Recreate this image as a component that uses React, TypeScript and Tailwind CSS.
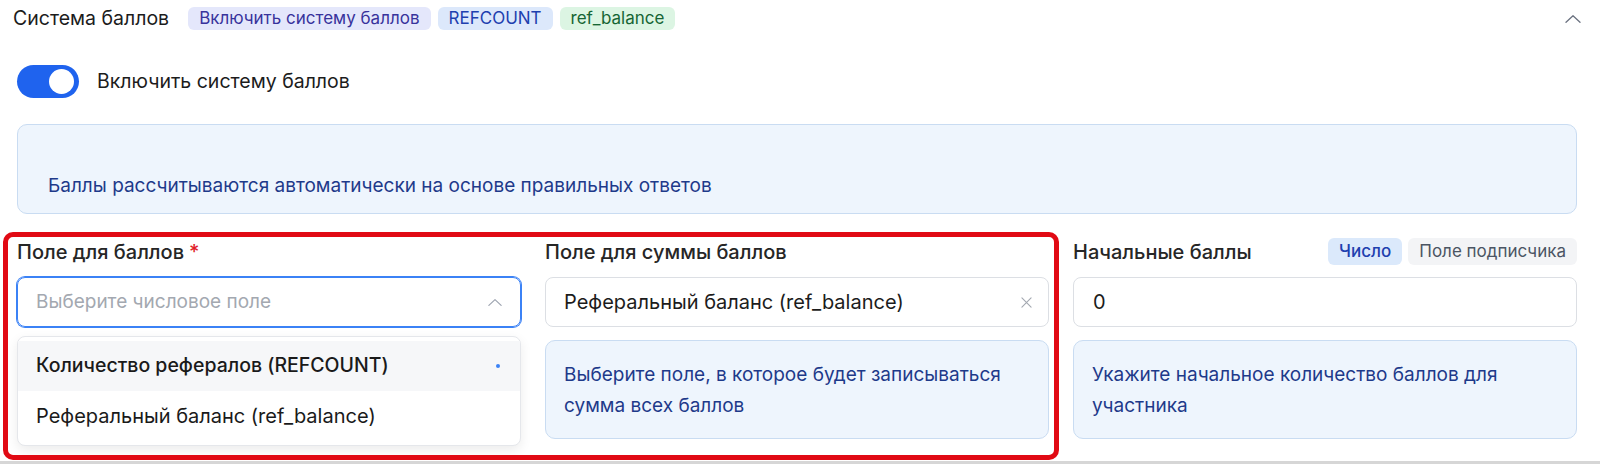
import { useState } from 'react';

function Chevron({ className }: { className?: string }) {
  return (
    <svg className={className} viewBox="0 0 16 8" fill="none" stroke="currentColor" strokeWidth="1.3" strokeLinecap="round" strokeLinejoin="round">
      <polyline points="1,7.3 8,0.8 15,7.3" />
    </svg>
  );
}

function Cross({ className }: { className?: string }) {
  return (
    <svg className={className} viewBox="0 0 12 12" fill="none" stroke="currentColor" strokeWidth="1.2" strokeLinecap="round">
      <path d="M1 1 L11 11 M11 1 L1 11" />
    </svg>
  );
}

export default function App() {
  const [enabled, setEnabled] = useState(true);
  const [mode, setMode] = useState<'number' | 'field'>('number');

  return (
    <div className="h-[464px] w-full overflow-hidden border-b-[3px] border-[#d6d6d6] bg-white font-['Inter',sans-serif] text-[#1f2937]">
      {/* Header */}
      <div className="flex h-[37px] items-center justify-between pl-[13px] pr-[19px]">
        <div className="flex items-center">
          <span className="mr-[19px] text-[19.5px] text-[#1c1c1c]">Система баллов</span>
          <div className="flex items-center gap-[7px]">
            <span className="flex h-[23px] items-center rounded-md bg-[#e4e7fb] px-[11px] text-[17px] text-[#38339c]">Включить систему баллов</span>
            <span className="flex h-[23px] items-center rounded-md bg-[#dce8fb] px-[11px] text-[17px] text-[#1e40af]">REFCOUNT</span>
            <span className="flex h-[23px] items-center rounded-md bg-[#dcf5e3] px-[11px] text-[17px] text-[#166534]">ref_balance</span>
          </div>
        </div>
        <Chevron className="h-[8px] w-[16px] text-[#6b7280]" />
      </div>

      <div className="pl-[17px] pr-[23px]">
        {/* Toggle */}
        <div className="mt-[28px] flex h-[33px] items-center gap-[18px]">
          <button
            onClick={() => setEnabled(!enabled)}
            className={`flex h-[33px] w-[62px] items-center rounded-full px-[5px] ${enabled ? 'justify-end bg-[#1f63ee]' : 'justify-start bg-[#d1d5db]'}`}
          >
            <span className="h-[25px] w-[25px] rounded-full bg-white" />
          </button>
          <span className="text-[19.5px] text-[#1c1c1c]">Включить систему баллов</span>
        </div>

        {/* Info */}
        <div className="mt-[26px] h-[90px] rounded-[10px] border border-[#c9dcf2] bg-[#eef5fd] px-[30px] pt-[48px]">
          <p className="text-[19px] leading-[26px] text-[#1e3a8a]">Баллы рассчитываются автоматически на основе правильных ответов</p>
        </div>

        {/* Fields */}
        <div className="relative mt-[24px] grid grid-cols-3 gap-6">
          {/* Field 1 */}
          <div>
            <div className="flex h-[27px] items-center text-[20px] font-medium text-[#262626]">
              Поле для баллов <span className="ml-[5px] text-[#e11d2a]">*</span>
            </div>
            <div className="relative mt-[12px]">
              <div className="flex h-[50px] items-center justify-between rounded-lg border border-[#3b82f6] px-[18px] ring-1 ring-[#3b82f6]">
                <span className="text-[19px] text-[#a3a8b0]">Выберите числовое поле</span>
                <Chevron className="h-[7px] w-[14px] text-[#9ca3af]" />
              </div>
              <div className="absolute left-0 right-0 top-[calc(100%+9px)] z-10 rounded-lg border border-[#e5e7eb] bg-white py-1 shadow-[0_4px_12px_rgba(0,0,0,0.08)]">
                <div className="flex h-[50px] items-center justify-between bg-[#f6f7f9] pl-[18px] pr-[20px]">
                  <span className="text-[19.5px] font-medium text-[#1a1a1a]">Количество рефералов (REFCOUNT)</span>
                  <span className="h-[4px] w-[4px] rounded-full bg-[#3b82f6]" />
                </div>
                <div className="flex h-[50px] items-center pl-[18px]">
                  <span className="text-[20px] text-[#1a1a1a]">Реферальный баланс (ref_balance)</span>
                </div>
              </div>
            </div>
          </div>

          {/* Field 2 */}
          <div>
            <div className="flex h-[27px] items-center text-[20px] font-medium text-[#262626]">Поле для суммы баллов</div>
            <div className="mt-[12px] flex h-[50px] items-center justify-between rounded-lg border border-[#dcdfe4] pl-[18px] pr-[16px]">
              <span className="text-[20px] text-[#1c1c1c]">Реферальный баланс (ref_balance)</span>
              <Cross className="h-[11px] w-[11px] text-[#a3a8b0]" />
            </div>
            <div className="mt-[13px] h-[99px] rounded-[10px] border border-[#c9dcf2] bg-[#eef5fd] px-[18px] py-[18px]">
              <p className="text-[19px] leading-[31px] text-[#1e3a8a]">Выберите поле, в которое будет записываться сумма всех баллов</p>
            </div>
          </div>

          {/* Field 3 */}
          <div>
            <div className="flex h-[27px] items-center justify-between">
              <span className="text-[20px] font-medium text-[#262626]">Начальные баллы</span>
              <div className="flex h-[27px] gap-[6px] text-[17px]">
                <button
                  onClick={() => setMode('number')}
                  className={`rounded-md px-[11px] ${mode === 'number' ? 'bg-[#dbe9fb] font-medium text-[#1e40af]' : 'bg-[#f3f4f6] text-[#4b5563]'}`}
                >
                  Число
                </button>
                <button
                  onClick={() => setMode('field')}
                  className={`rounded-md px-[11px] ${mode === 'field' ? 'bg-[#dbe9fb] font-medium text-[#1e40af]' : 'bg-[#f3f4f6] text-[#4b5563]'}`}
                >
                  Поле подписчика
                </button>
              </div>
            </div>
            <div className="mt-[12px] flex h-[50px] items-center rounded-lg border border-[#dcdfe4] px-[19px]">
              <span className="text-[20px] text-[#1c1c1c]">0</span>
            </div>
            <div className="mt-[13px] h-[99px] rounded-[10px] border border-[#c9dcf2] bg-[#eef5fd] px-[18px] py-[18px]">
              <p className="text-[19px] leading-[31px] text-[#1e3a8a]">Укажите начальное количество баллов для участника</p>
            </div>
          </div>

          {/* annotation frame over the first two fields */}
          <div className="pointer-events-none absolute left-[-14px] top-[-6px] z-20 h-[228px] w-[1056px] rounded-[10px] border-[5px] border-[#e10a14]" />
        </div>
      </div>
    </div>
  );
}
